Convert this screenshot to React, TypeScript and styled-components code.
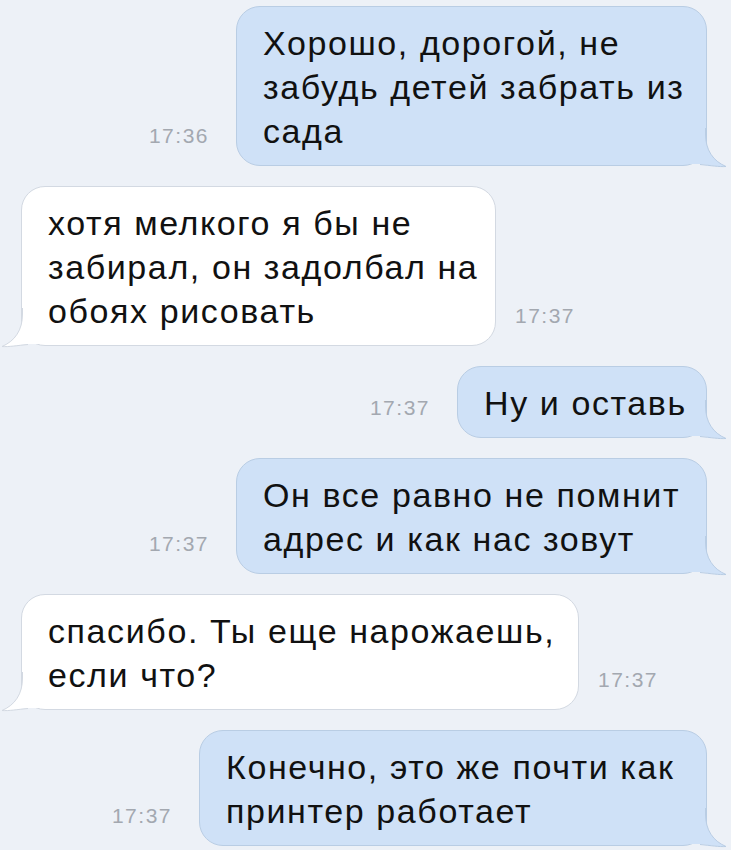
import React from 'react';
import styled, { createGlobalStyle } from 'styled-components';

const GlobalStyle = createGlobalStyle`
  html, body {
    margin: 0;
    padding: 0;
    background: #edf1f7;
  }
  body {
    font-family: "Liberation Sans", Arial, sans-serif;
  }
`;

const Chat = styled.main`
  width: 731px;
  height: 850px;
  overflow: hidden;
  box-sizing: border-box;
  padding-top: 6px;
  display: flex;
  flex-direction: column;
  gap: 20px;
  background: #edf1f7;
`;

const Row = styled.div<{ $out: boolean }>`
  display: flex;
  justify-content: ${p => (p.$out ? 'flex-end' : 'flex-start')};
  align-items: last baseline;
  gap: ${p => (p.$out ? '27px' : '19px')};
  padding: ${p => (p.$out ? '0 24px 0 0' : '0 0 0 21px')};
`;

const Bubble = styled.div<{ $out: boolean; $w: number }>`
  position: relative;
  box-sizing: border-box;
  width: ${p => p.$w}px;
  padding: 14px 0 12px 26px;
  border: 1px solid ${p => (p.$out ? '#b9cde4' : '#d3d9e2')};
  border-radius: 24px;
  background: ${p => (p.$out ? '#cfe1f7' : '#ffffff')};
  color: #111111;
  font-size: 34px;
  line-height: 44px;
  letter-spacing: 1.6px;
  white-space: nowrap;
`;

const Text = styled.div`
  position: relative;
  z-index: 1;
`;

const Tail = styled.svg<{ $out: boolean }>`
  position: absolute;
  z-index: 0;
  bottom: -3px;
  width: 50px;
  height: 40px;
  ${p => (p.$out ? 'right: -24px;' : 'left: -24px; transform: scaleX(-1);')}
`;

const Time = styled.span`
  font-size: 21px;
  line-height: 24px;
  letter-spacing: 1.5px;
  color: #a3a8b0;
`;

type Msg = { out: boolean; time: string; width: number; lines: string[] };

const messages: Msg[] = [
  { out: true, time: '17:36', width: 471, lines: ['Хорошо, дорогой, не', 'забудь детей забрать из', 'сада'] },
  { out: false, time: '17:37', width: 475, lines: ['хотя мелкого я бы не', 'забирал, он задолбал на', 'обоях рисовать'] },
  { out: true, time: '17:37', width: 250, lines: ['Ну и оставь'] },
  { out: true, time: '17:37', width: 471, lines: ['Он все равно не помнит', 'адрес и как нас зовут'] },
  { out: false, time: '17:37', width: 558, lines: ['спасибо. Ты еще нарожаешь,', 'если что?'] },
  { out: true, time: '17:37', width: 508, lines: ['Конечно, это же почти как', 'принтер работает'] },
];

const BubbleTail: React.FC<{ out: boolean }> = ({ out }) => {
  const fill = out ? '#cfe1f7' : '#ffffff';
  const stroke = out ? '#b9cde4' : '#d3d9e2';
  return (
    <Tail $out={out} viewBox="0 0 50 40">
      <path d="M0 0 H25.5 V6 C25.5 22 33 33 46 38.5 C39 39 31 37.5 22 36 H0 Z" fill={fill} />
      <path d="M25.5 0 V6 C25.5 22 33 33 46 38.5 C39 39 31 37.5 20 36.5" fill="none" stroke={stroke} strokeWidth="1" />
    </Tail>
  );
};

const App: React.FC = () => (
  <>
    <GlobalStyle />
    <Chat>
      {messages.map((m, i) => {
        const bubble = (
          <Bubble $out={m.out} $w={m.width}>
            <BubbleTail out={m.out} />
            <Text>
              {m.lines.map((l, j) => (
                <div key={j}>{l}</div>
              ))}
            </Text>
          </Bubble>
        );
        const time = <Time>{m.time}</Time>;
        return (
          <Row key={i} $out={m.out}>
            {m.out ? time : bubble}
            {m.out ? bubble : time}
          </Row>
        );
      })}
    </Chat>
  </>
);

export default App;
